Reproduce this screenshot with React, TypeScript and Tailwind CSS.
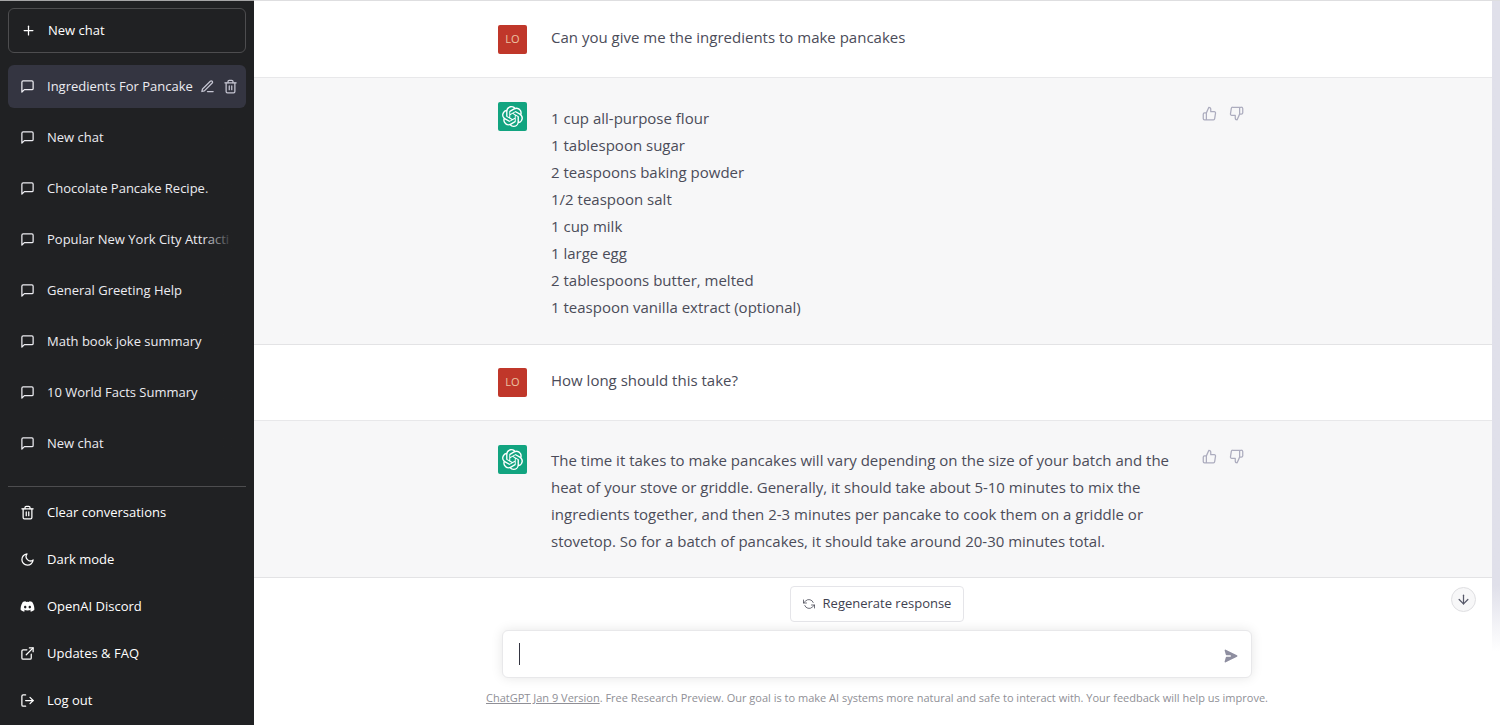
import { useState } from 'react';
import type { ReactNode } from 'react';
import {
  FiArrowDown,
  FiEdit3,
  FiExternalLink,
  FiLogOut,
  FiMessageSquare,
  FiMoon,
  FiPlus,
  FiRefreshCcw,
  FiThumbsDown,
  FiThumbsUp,
  FiTrash2,
} from 'react-icons/fi';
import { FaDiscord } from 'react-icons/fa';
import { SiOpenai } from 'react-icons/si';

const chats = [
  'Ingredients For Pancake',
  'New chat',
  'Chocolate Pancake Recipe.',
  'Popular New York City Attracti',
  'General Greeting Help',
  'Math book joke summary',
  '10 World Facts Summary',
  'New chat',
];

const links = [
  { label: 'Clear conversations', icon: <FiTrash2 /> },
  { label: 'Dark mode', icon: <FiMoon /> },
  { label: 'OpenAI Discord', icon: <FaDiscord /> },
  { label: 'Updates & FAQ', icon: <FiExternalLink /> },
  { label: 'Log out', icon: <FiLogOut /> },
];

const ingredients = [
  '1 cup all-purpose flour',
  '1 tablespoon sugar',
  '2 teaspoons baking powder',
  '1/2 teaspoon salt',
  '1 cup milk',
  '1 large egg',
  '2 tablespoons butter, melted',
  '1 teaspoon vanilla extract (optional)',
];

function Sidebar() {
  const [active, setActive] = useState(0);

  return (
    <aside className="flex w-[254px] shrink-0 flex-col border-t border-[#a5a5a6] bg-[#202123] px-2 pt-[7px] pb-[3px] text-[13px] text-[#ececf1]">
      <button className="flex h-[45px] shrink-0 items-center gap-3 rounded-md border border-[#4d4d4f] px-3 text-white">
        <FiPlus className="size-[15px]" />
        New chat
      </button>

      <nav className="mt-3 flex min-h-0 flex-1 flex-col gap-2 overflow-hidden">
        {chats.map((title, i) =>
          i === active ? (
            <div key={i} className="flex h-[43px] shrink-0 items-center rounded-md bg-[#343541] pr-2 pl-3">
              <FiMessageSquare className="size-[15px] shrink-0" />
              <span className="ml-3 flex-1 overflow-hidden whitespace-nowrap">{title}</span>
              <button aria-label="Rename chat" className="ml-1 text-[#c5c5d2]">
                <FiEdit3 className="size-[15px]" />
              </button>
              <button aria-label="Delete chat" className="ml-2 text-[#c5c5d2]">
                <FiTrash2 className="size-[15px]" />
              </button>
            </div>
          ) : (
            <button
              key={i}
              onClick={() => setActive(i)}
              className="flex h-[43px] shrink-0 items-center gap-3 rounded-md pr-3 pl-3 text-left"
            >
              <FiMessageSquare className="size-[15px] shrink-0" />
              <span className="relative flex-1 overflow-hidden whitespace-nowrap">
                {title}
                <span className="absolute inset-y-0 right-0 w-8 bg-gradient-to-l from-[#202123]" />
              </span>
            </button>
          ),
        )}
      </nav>

      <div className="flex flex-col gap-1 border-t border-[#4d4d4f] pt-1">
        {links.map(({ label, icon }) => (
          <a key={label} href="#" className="flex h-[43px] items-center gap-3 rounded-md px-3 text-white">
            <span className="text-[15px]">{icon}</span>
            {label}
          </a>
        ))}
      </div>
    </aside>
  );
}

function UserMessage({ children }: { children: ReactNode }) {
  return (
    <div className="border-b border-[#e8e8ea] bg-white py-[23px]">
      <div className="mx-auto flex w-full max-w-[750px] gap-6">
        <div className="flex size-[29px] shrink-0 items-center justify-center rounded-xs bg-[#c0372a] text-[11px] text-[#ecc3a4]">
          LO
        </div>
        <p className="leading-[25px]">{children}</p>
      </div>
    </div>
  );
}

function BotMessage({ children }: { children: ReactNode }) {
  return (
    <div className="border-b border-[#e3e3e5] bg-[#f7f7f8] pt-6 pb-[22px]">
      <div className="mx-auto flex w-full max-w-[750px]">
        <div className="flex size-[29px] shrink-0 items-center justify-center rounded-xs bg-[#12a480] text-white">
          <SiOpenai className="size-[21px]" />
        </div>
        <div className="ml-6 min-w-0 flex-1 pt-[2px] leading-[27px]">{children}</div>
        <div className="ml-4 flex shrink-0 gap-1 self-start text-[#acacbe]">
          <button aria-label="Good response" className="p-1">
            <FiThumbsUp className="size-[15px]" />
          </button>
          <button aria-label="Bad response" className="p-1">
            <FiThumbsDown className="size-[15px]" />
          </button>
        </div>
      </div>
    </div>
  );
}

function Composer() {
  const [text, setText] = useState('');

  return (
    <footer className="flex shrink-0 flex-col items-center bg-white pt-2 pb-[19px]">
      <button className="flex h-9 items-center gap-2 rounded border border-[#e5e5e9] bg-white px-3 text-[13px] text-[#40414f]">
        <FiRefreshCcw className="size-3" strokeWidth={1.5} />
        Regenerate response
      </button>

      <form
        onSubmit={(e) => e.preventDefault()}
        className="mt-2 flex h-12 w-full max-w-[750px] items-center rounded-md border border-[#e8e8ea] bg-white pr-3 pl-4 shadow-[0_0_12px_rgba(0,0,0,0.10)]"
      >
        {text === '' && <span className="h-[22px] w-px bg-[#343541]" />}
        <input
          aria-label="Message"
          value={text}
          onChange={(e) => setText(e.target.value)}
          className="h-full min-w-0 flex-1 bg-transparent outline-none"
        />
        <button aria-label="Send" className="pt-1 text-[#8e8ea0]">
          <svg viewBox="0 0 20 20" fill="currentColor" className="size-4 rotate-90">
            <path d="M10.894 2.553a1 1 0 00-1.788 0l-7 14a1 1 0 001.169 1.409l5-1.429A1 1 0 009 15.571V11a1 1 0 112 0v4.571a1 1 0 00.725.962l5 1.428a1 1 0 001.17-1.408l-7-14z" />
          </svg>
        </button>
      </form>

      <p className="mt-3 text-[11px] leading-4 text-[#8f8f96]">
        <a href="#" className="underline">
          ChatGPT Jan 9 Version
        </a>
        . Free Research Preview. Our goal is to make AI systems more natural and safe to interact with. Your feedback will
        help us improve.
      </p>
    </footer>
  );
}

export default function App() {
  return (
    <div className="flex h-screen overflow-hidden bg-white font-['Segoe_UI','Open_Sans',sans-serif]">
      <Sidebar />

      <main className="relative flex min-w-0 flex-1 flex-col border-t border-[#dedee0] text-[15px] text-[#4b4c59]">
        <div className="min-h-0 flex-1 overflow-hidden pt-px pr-2">
          <UserMessage>Can you give me the ingredients to make pancakes</UserMessage>
          <BotMessage>
            <ul className="py-px">
              {ingredients.map((item) => (
                <li key={item}>{item}</li>
              ))}
            </ul>
          </BotMessage>
          <UserMessage>How long should this take?</UserMessage>
          <BotMessage>
            <p>
              The time it takes to make pancakes will vary depending on the size of your batch and the heat of your stove or
              griddle. Generally, it should take about 5-10 minutes to mix the ingredients together, and then 2-3 minutes per
              pancake to cook them on a griddle or stovetop. So for a batch of pancakes, it should take around 20-30 minutes
              total.
            </p>
          </BotMessage>
        </div>

        <Composer />

        {/* scrollbar thumb, fades out beside the composer */}
        <div className="absolute top-0 right-0 h-[650px] w-2 bg-gradient-to-b from-[#e0e0ea] from-90% to-transparent" />

        <button
          aria-label="Scroll to bottom"
          className="absolute right-6 bottom-[113px] flex size-[25px] items-center justify-center rounded-full border border-[#dfdfe2] bg-[#f7f7f8] text-[#565869]"
        >
          <FiArrowDown className="size-[15px]" />
        </button>
      </main>
    </div>
  );
}
